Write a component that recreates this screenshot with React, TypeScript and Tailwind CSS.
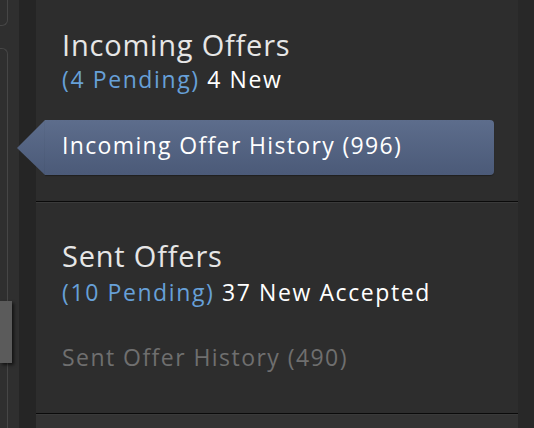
import React from "react";

const font = { fontFamily: '"Open Sans", "Noto Sans", Arial, sans-serif' };

function HistoryButton({ label }: { label: string }) {
  return (
    <div className="flex h-[55px] -ml-[19px] mr-[24px]">
      <svg width="28" height="55" viewBox="0 0 28 55" className="shrink-0">
        <defs>
          <linearGradient id="tipGrad" x1="0" y1="0" x2="0" y2="1">
            <stop offset="0" stopColor="#5d6d8c" />
            <stop offset="1" stopColor="#4b5a78" />
          </linearGradient>
        </defs>
        <polygon points="0,28 28,0 28,55" fill="url(#tipGrad)" />
      </svg>
      <div className="flex-1 flex items-center pl-[17px] pb-[5px] rounded-r-[4px] bg-gradient-to-b from-[#5d6d8c] to-[#4b5a78] text-[23px] leading-[28px] tracking-[1.35px] text-white shadow-[0_1px_1px_rgba(0,0,0,0.3)]">
        {label}
      </div>
    </div>
  );
}

function Divider() {
  return (
    <div className="flex flex-col">
      <div className="h-[1px] bg-[#0a0a0a]" />
      <div className="h-[1px] bg-[#3a3a3a]" />
    </div>
  );
}

export default function App() {
  return (
    <div className="flex w-[534px] h-[428px] overflow-hidden bg-[#2d2d2d]" style={font}>
      {/* left rail */}
      <div className="w-[19px] shrink-0 bg-[#2f2f2f] flex flex-col">
        <div className="h-[26px] w-[8px] border-r border-b border-[#464646] rounded-br-[6px]" />
        <div className="mt-[22px] flex-1 w-[8px] border-r border-t border-[#464646] rounded-tr-[6px] flex flex-col">
          <div className="mt-[252px] h-[62px] w-[12px] bg-[#5b5b5b] shadow-[2px_2px_3px_rgba(0,0,0,0.6)]" />
        </div>
      </div>
      <div className="w-[17px] shrink-0 bg-[#252525]" />

      {/* offers panel */}
      <div className="flex-1 flex flex-col bg-[#2d2d2d]">
        <div className="h-[201px] pt-[28px]">
          <div className="pl-[26px]">
            <div className="text-[29px] leading-[34px] tracking-[0.8px] text-[#e6e6e6]">Incoming Offers</div>
            <div className="mt-[3px] text-[23px] leading-[28px] tracking-[1.6px] text-white">
              <span className="text-[#67a0d8]">(4 Pending)</span> 4 New
            </div>
          </div>
          <div className="mt-[27px]">
            <HistoryButton label="Incoming Offer History (996)" />
          </div>
        </div>
        <Divider />
        <div className="h-[210px] pt-[36px] pl-[26px]">
          <div className="text-[29px] leading-[34px] tracking-[0.8px] text-[#e6e6e6]">Sent Offers</div>
          <div className="mt-[5px] text-[23px] leading-[28px] tracking-[1.6px] text-white">
            <span className="text-[#67a0d8]">(10 Pending)</span> 37 New Accepted
          </div>
          <div className="mt-[37px] text-[23px] leading-[28px] tracking-[1.45px] text-[#6f6f6f]">
            Sent Offer History (490)
          </div>
        </div>
        <Divider />
        <div className="flex-1 bg-[#333333]" />
      </div>

      <div className="w-[16px] shrink-0 bg-[#282828]" />
    </div>
  );
}
